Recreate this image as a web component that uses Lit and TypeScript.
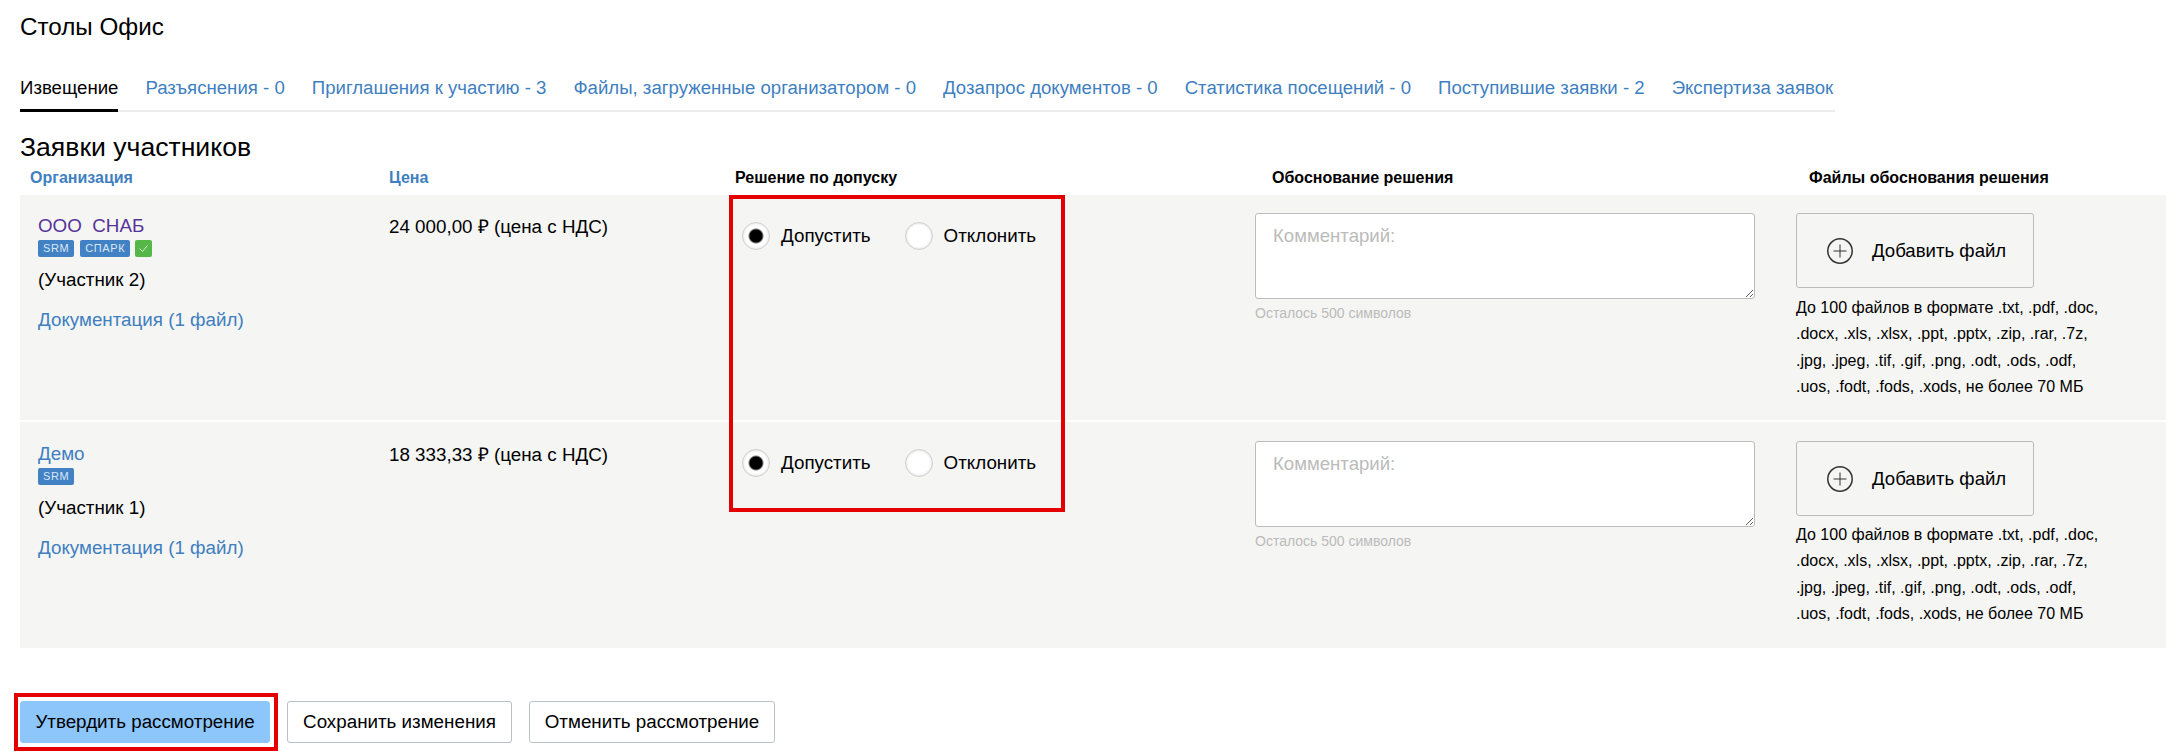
import { LitElement, html, css } from "lit";
import { customElement } from "lit/decorators.js";

const TABS = [
  "Разъяснения - 0",
  "Приглашения к участию - 3",
  "Файлы, загруженные организатором - 0",
  "Дозапрос документов - 0",
  "Статистика посещений - 0",
  "Поступившие заявки - 2",
  "Экспертиза заявок",
];

const ROWS = [
  { name: "ООО  СНАБ", visited: true, spark: true, who: "(Участник 2)", price: "24 000,00 ₽ (цена с НДС)" },
  { name: "Демо", visited: false, spark: false, who: "(Участник 1)", price: "18 333,33 ₽ (цена с НДС)" },
];

@customElement("app-root")
export class AppRoot extends LitElement {
  static styles = css`
    :host {
      display: block;
      width: 2182px;
      height: 756px;
      overflow: hidden;
      background: #fff;
      color: #000;
      font: 18.8px/26px "Liberation Sans", Arial, sans-serif;
    }
    * { box-sizing: border-box; }
    .page { padding: 0 16px 0 20px; }
    .title { font-size: 24.2px; font-weight: 400; line-height: 54px; height: 54px; margin: 0; }
    .tabs {
      display: flex;
      gap: 27px;
      width: 1815px;
      height: 46px;
      margin-top: 12px;
      border-bottom: 2px solid #ececec;
      font-size: 18.63px;
    }
    .tab { height: 46px; line-height: 44px; color: #3f7fbf; white-space: nowrap; }
    .tab.active { color: #000; border-bottom: 3px solid #000; }
    .heading { font-size: 26.6px; font-weight: 400; line-height: 30px; height: 30px; margin: 20px 0 0; }
    .grid { display: grid; grid-template-columns: 351px 351px 515px 541px 388px; }
    .head { height: 33px; line-height: 32px; font-size: 16px; font-weight: 700; }
    .head .blue { color: #3f7fbf; }
    .h1 { padding-left: 10px; }
    .h2 { padding-left: 18px; }
    .h3 { padding-left: 13px; }
    .h4 { padding-left: 35px; }
    .h5 { padding-left: 31px; }
    .body { position: relative; display: flex; flex-direction: column; gap: 2px; }
    .row { height: 225px; background: #f5f5f3; padding-top: 18px; }
    .row + .row { height: 226px; padding-top: 19px; }
    .row + .row .decision { padding-top: 8px; }
    .row + .row .hint { margin-top: 6px; }
    .cell { padding-left: 18px; }
    .price { padding-top: 1px; }
    .name {
      display: block;
      max-width: 107px;
      overflow: hidden;
      white-space: pre;
      color: #3f7fbf;
    }
    .name.visited { color: #553399; }
    .badges { display: flex; gap: 6px; height: 17px; margin-top: 1px; }
    .badge {
      height: 17px;
      padding: 0 5px;
      border-radius: 2px;
      background: #4181c4;
      color: #dbe8f5;
      font-size: 11px;
      line-height: 17px;
      letter-spacing: 0.6px;
    }
    .badge.ok { width: 17px; padding: 0; margin-left: -1px; background: #55b747; display: flex; align-items: center; justify-content: center; }
    .who { margin-top: 10px; }
    .doc { margin-top: 14px; color: #3f7fbf; }
    .decision { display: flex; padding: 9px 0 0 20px; }
    .opt { display: flex; align-items: center; gap: 11px; height: 28px; }
    .opt + .opt { margin-left: 34px; }
    input[type="radio"] {
      appearance: none;
      width: 28px;
      height: 28px;
      margin: 0;
      flex: none;
      border-radius: 50%;
      border: 1px solid #cfcfcf;
      background: #fff;
      box-shadow: inset 0 0 3px rgba(0, 0, 0, 0.18);
    }
    input[type="radio"]:checked {
      background: radial-gradient(circle, #000 0, #000 6px, #fff 8px);
    }
    .comment { padding-left: 18px; }
    textarea {
      display: block;
      width: 500px;
      height: 86px;
      padding: 9px 17px;
      border: 1px solid #bbb;
      border-radius: 3px;
      background: #fff;
      font: 18.6px/26px "Liberation Sans", Arial, sans-serif;
      outline: none;
    }
    textarea::placeholder { color: #bbb; opacity: 1; }
    .left { margin-top: 5px; font-size: 14px; line-height: 18px; color: #bbb; }
    .files { padding-left: 18px; }
    .add {
      display: flex;
      align-items: center;
      gap: 19px;
      width: 238px;
      height: 75px;
      padding-left: 30px;
      border: 1px solid #bbb;
      border-radius: 3px;
      background: transparent;
      color: #000;
      font: 18.6px/26px "Liberation Sans", Arial, sans-serif;
    }
    .add svg { flex: none; display: block; }
    .hint { width: 310px; margin-top: 7px; font-size: 16px; line-height: 26.4px; }
    .mark {
      position: absolute;
      left: 709px;
      top: 0;
      width: 336px;
      height: 317px;
      border: 4px solid #e50000;
      pointer-events: none;
    }
    .actions { display: flex; gap: 17px; margin-top: 53px; }
    .btn {
      height: 42px;
      padding: 0;
      border: 1px solid #b9c0c7;
      border-radius: 3px;
      background: #fff;
      color: #000;
      font: 18.8px/26px "Liberation Sans", Arial, sans-serif;
    }
    .primary-wrap { position: relative; }
    .primary { display: block; width: 250px; border-color: #8cc6fb; background: #8cc6fb; }
    .primary-wrap::after {
      content: "";
      position: absolute;
      inset: -8px -8px -8px -6px;
      border: 4px solid #e50000;
    }
    .save { width: 225px; }
    .cancel { width: 246px; }
  `;

  private plus() {
    return html`<svg width="26" height="26" viewBox="0 0 26 26" fill="none" stroke="#333">
      <circle cx="13" cy="13" r="12.2" stroke-width="1.5"></circle>
      <path d="M13 6.5v13M6.5 13h13" stroke-width="1"></path>
    </svg>`;
  }

  private row(r: (typeof ROWS)[number], i: number) {
    return html`<div class="grid row">
      <div class="cell">
        <a class="name ${r.visited ? "visited" : ""}">${r.name}</a>
        <div class="badges">
          <span class="badge">SRM</span>
          ${r.spark
            ? html`<span class="badge">СПАРК</span>
                <span class="badge ok">
                  <svg width="11" height="9" viewBox="0 0 11 9" fill="none" stroke="#d9efd5" stroke-width="1">
                    <path d="M1.5 4.5l3 3 5-6"></path>
                  </svg>
                </span>`
            : ""}
        </div>
        <div class="who">${r.who}</div>
        <div class="doc">Документация (1 файл)</div>
      </div>
      <div class="cell price">${r.price}</div>
      <div class="decision">
        <label class="opt"><input type="radio" name="d${i}" checked />Допустить</label>
        <label class="opt"><input type="radio" name="d${i}" />Отклонить</label>
      </div>
      <div class="comment">
        <textarea placeholder="Комментарий:"></textarea>
        <div class="left">Осталось 500 символов</div>
      </div>
      <div class="files">
        <button class="add">${this.plus()}Добавить файл</button>
        <div class="hint">До 100 файлов в формате .txt, .pdf, .doc, .docx, .xls, .xlsx, .ppt, .pptx, .zip, .rar, .7z, .jpg, .jpeg, .tif, .gif, .png, .odt, .ods, .odf, .uos, .fodt, .fods, .xods, не более 70 МБ</div>
      </div>
    </div>`;
  }

  render() {
    return html`<div class="page">
      <h1 class="title">Столы Офис</h1>
      <nav class="tabs">
        <span class="tab active">Извещение</span>
        ${TABS.map((t) => html`<span class="tab">${t}</span>`)}
      </nav>
      <h2 class="heading">Заявки участников</h2>
      <div class="grid head">
        <div class="h1 blue">Организация</div>
        <div class="h2 blue">Цена</div>
        <div class="h3">Решение по допуску</div>
        <div class="h4">Обоснование решения</div>
        <div class="h5">Файлы обоснования решения</div>
      </div>
      <div class="body">
        ${ROWS.map((r, i) => this.row(r, i))}
        <div class="mark"></div>
      </div>
      <div class="actions">
        <div class="primary-wrap"><button class="btn primary">Утвердить рассмотрение</button></div>
        <button class="btn save">Сохранить изменения</button>
        <button class="btn cancel">Отменить рассмотрение</button>
      </div>
    </div>`;
  }
}
